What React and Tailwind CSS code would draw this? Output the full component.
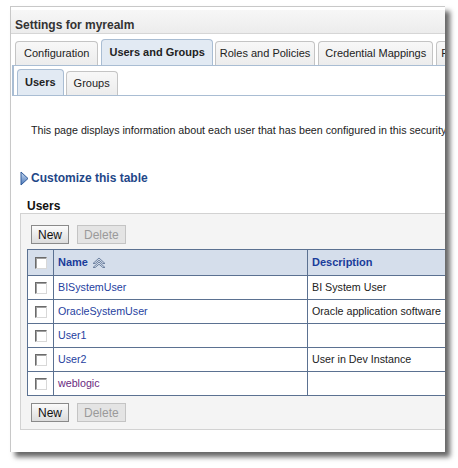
import React from "react";

function Checkbox() {
  return (
    <span className="inline-block w-[12px] h-[12px] bg-white border border-t-[#6b6b6b] border-l-[#6b6b6b] border-r-[#d8d8d8] border-b-[#d8d8d8] shadow-[inset_1px_1px_0_#a0a0a0]" />
  );
}

function SortIcon() {
  return (
    <svg width="14" height="11" viewBox="0 0 14 11" className="ml-[4px]">
      <path d="M1 6.5 L7 1 L13 6.5 L10.8 6.5 L7 3.2 L3.2 6.5 Z" fill="#cfd8e6" stroke="#6f83a2" strokeWidth="1" strokeLinejoin="round" />
      <path d="M1 10.5 L7 5 L13 10.5 L10.8 10.5 L7 7.2 L3.2 10.5 Z" fill="#cfd8e6" stroke="#6f83a2" strokeWidth="1" strokeLinejoin="round" />
    </svg>
  );
}

function Triangle() {
  return (
    <svg width="9" height="15" viewBox="0 0 9 15">
      <defs>
        <linearGradient id="tg" x1="0" y1="0" x2="0" y2="1">
          <stop offset="0" stopColor="#c9dbf2" />
          <stop offset="1" stopColor="#4a77b8" />
        </linearGradient>
      </defs>
      <path d="M1 1 L8 7.5 L1 14 Z" fill="url(#tg)" stroke="#2f5a9a" strokeWidth="1" strokeLinejoin="round" />
    </svg>
  );
}

function Btn({ children, disabled }) {
  return disabled ? (
    <span className="inline-flex items-center justify-center h-[19px] px-[6px] text-[12px] text-[#9a9a9a] bg-[#e4e4e4] border border-[#c4c4c4]">
      {children}
    </span>
  ) : (
    <span className="inline-flex items-center justify-center h-[19px] px-[6px] text-[12px] text-[#111] bg-gradient-to-b from-[#fbfbfb] to-[#dcdcdc] border border-[#8a8a8a]">
      {children}
    </span>
  );
}

const rows = [
  { name: "BISystemUser", desc: "BI System User" },
  { name: "OracleSystemUser", desc: "Oracle application software" },
  { name: "User1", desc: "" },
  { name: "User2", desc: "User in Dev Instance" },
  { name: "weblogic", desc: "", visited: true },
];

const tabBase = "h-[24px] flex items-center text-[11px] text-[#222] bg-gradient-to-b from-[#f8f8f8] to-[#ececec] border border-b-0 border-[#c4c4c4] rounded-t-[4px]";

export default function App() {
  return (
    <div className="w-[458px] h-[468px] bg-white overflow-hidden font-['Liberation_Sans',Arial,sans-serif] text-[#222]">
      <div className="ml-[10px] mt-[6px] w-[435px] h-[446px] bg-white border-l border-t border-[#c8c8c8] shadow-[5px_5px_5px_rgba(0,0,0,0.6)] overflow-hidden">
        {/* header */}
        <div className="mt-[3px] h-[24px] pt-[6px] bg-gradient-to-b from-[#f7f7f7] to-[#ececec] border-b border-[#d6d6d6] pl-[4px] flex items-center text-[12px] font-bold text-[#333] whitespace-nowrap">
          Settings for myrealm
        </div>
        {/* main tabs */}
        <div className="mt-[6px] pl-[4px] flex items-end gap-[3px] h-[25px] whitespace-nowrap">
          <div className={tabBase + " px-[8px]"}>Configuration</div>
          <div className="h-[26px] px-[7px] flex items-center text-[11px] font-bold text-[#222] bg-[#e2eaf3] border border-b-0 border-[#a9bdd3] rounded-t-[4px]">Users and Groups</div>
          <div className={tabBase + " px-[4px] -ml-[1px]"}>Roles and Policies</div>
          <div className={tabBase + " px-[6px]"}>Credential Mappings</div>
          <div className={tabBase + " px-[4px]"}>Providers</div>
        </div>
        {/* sub tabs */}
        <div className="ml-[1px] border-l-2 border-t border-b border-[#a9bdd3] pl-[3px] pt-[3px] h-[31px] flex items-end gap-[2px] whitespace-nowrap">
          <div className="h-[26px] px-[7px] flex items-center text-[11px] font-bold text-[#222] bg-[#e2eaf3] border border-b-0 border-[#a9bdd3] rounded-t-[4px]">Users</div>
          <div className={tabBase + " px-[7px]"}>Groups</div>
        </div>
        {/* description */}
        <div className="mt-[28px] pl-[20px] text-[10.7px] leading-[13px] text-[#222] whitespace-nowrap">
          This page displays information about each user that has been configured in this security realm.
        </div>
        {/* customize */}
        <div className="mt-[34px] h-[15px] pl-[9px] flex items-center gap-[2px] whitespace-nowrap">
          <Triangle />
          <span className="text-[12px] leading-[15px] font-bold text-[#1f4788]">Customize this table</span>
        </div>
        {/* Users heading */}
        <div className="mt-[14px] pl-[16px] text-[12px] font-bold text-[#111] leading-[12px]">Users</div>
        {/* panel */}
        <div className="mt-[1px] ml-[9px] w-[600px] h-[217px] bg-[#f4f4f4] border border-[#d2d2d2] pt-[11px]">
          <div className="pl-[10px] flex gap-[8px]">
            <Btn>New</Btn>
            <Btn disabled>Delete</Btn>
          </div>
          <table className="mt-[5px] ml-[6px] w-[540px] border-collapse border border-[#5b7191] text-[10.7px]">
            <thead>
              <tr className="h-[26px] bg-[#d5deeb]">
                <th className="w-[26px] border border-[#5b7191] text-center align-middle">
                  <div className="flex justify-center"><Checkbox /></div>
                </th>
                <th className="w-[254px] border border-[#5b7191] text-left pl-[4px]">
                  <div className="flex items-center font-bold text-[#1a3c9a] text-[11px]">
                    Name<SortIcon />
                  </div>
                </th>
                <th className="border border-[#5b7191] text-left pl-[4px] font-bold text-[11px] text-[#1a3c9a]">Description</th>
              </tr>
            </thead>
            <tbody>
              {rows.map((r) => (
                <tr key={r.name} className="h-[24px] bg-white">
                  <td className="border border-[#5b7191] text-center align-middle">
                    <div className="flex justify-center"><Checkbox /></div>
                  </td>
                  <td className={"border border-[#5b7191] pl-[4px] " + (r.visited ? "text-[#6a2a80]" : "text-[#1f3fa0]")}>{r.name}</td>
                  <td className="border border-[#5b7191] pl-[4px] text-[#222] whitespace-nowrap">{r.desc}</td>
                </tr>
              ))}
            </tbody>
          </table>
          <div className="mt-[7px] pl-[10px] flex gap-[8px]">
            <Btn>New</Btn>
            <Btn disabled>Delete</Btn>
          </div>
        </div>
      </div>
    </div>
  );
}
